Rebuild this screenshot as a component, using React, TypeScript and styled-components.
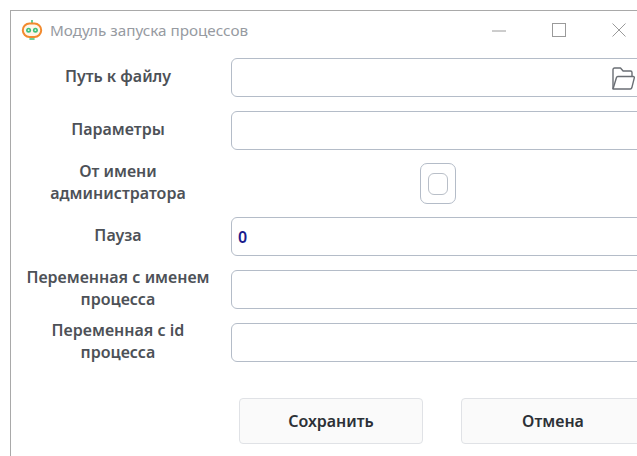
import styled, { createGlobalStyle } from 'styled-components';

const GlobalStyle = createGlobalStyle`
  html, body {
    margin: 0;
    height: 100%;
    overflow: hidden;
    background: #ffffff;
  }

  body {
    font-family: 'Noto Sans', 'Open Sans', sans-serif;
  }
`;

const Page = styled.div`
  width: 637px;
  height: 456px;
  padding: 10px 0 0 10px;
  box-sizing: border-box;
  overflow: hidden;
`;

const Window = styled.div`
  width: 680px;
  height: 460px;
  box-sizing: border-box;
  border: 1px solid #a9a9a9;
  background: #ffffff;
`;

const TitleBar = styled.div`
  height: 37px;
  display: flex;
  align-items: center;
  padding-left: 10px;
`;

const Title = styled.span`
  width: 197px;
  margin-left: 7px;
  font-size: 15.25px;
  white-space: nowrap;
  color: #969aa1;
`;

const WindowControls = styled.div`
  margin-left: 245px;
  display: flex;
  align-items: center;
  gap: 46px;
  color: #9a9a9a;
`;

const Form = styled.div`
  display: flex;
  flex-direction: column;
  padding-top: 10px;
`;

interface IRow {
  height: number;
  gapAfter: number;
}

const Row = styled.div<IRow>`
  display: grid;
  grid-template-columns: 214px 1fr;
  column-gap: 6px;
  align-items: center;
  height: ${(props) => props.height}px;
  margin-bottom: ${(props) => props.gapAfter}px;
`;

const Label = styled.div`
  font-size: 16px;
  line-height: 22px;
  font-weight: 600;
  color: #4d5157;
  text-align: center;
  margin-top: -3px;
  white-space: nowrap;
`;

const InputBox = styled.div`
  position: relative;
  height: 39px;
  box-sizing: border-box;
  display: flex;
  align-items: center;
  padding-left: 6px;
  border: 1px solid #b4bcc8;
  border-radius: 6px;
  background: #ffffff;
  font-size: 16px;
  font-weight: 600;
  color: #1a1a8c;
`;

const FolderButton = styled.div`
  position: absolute;
  left: 379px;
  top: 7px;
  display: flex;
  color: #6a6e74;
`;

const CheckCell = styled.div`
  padding-left: 189px;
  display: flex;
`;

const CheckOuter = styled.div`
  width: 36px;
  height: 41px;
  box-sizing: border-box;
  display: flex;
  align-items: center;
  justify-content: center;
  border: 1px solid #b4bcc8;
  border-radius: 7px;
`;

const CheckInner = styled.div`
  width: 20px;
  height: 22px;
  box-sizing: border-box;
  border: 1px solid #b9bfc8;
  border-radius: 6px;
`;

const Actions = styled.div`
  display: flex;
  gap: 38px;
  padding: 37px 0 0 228px;
`;

const Button = styled.div`
  flex: none;
  width: 184px;
  height: 46px;
  box-sizing: border-box;
  display: flex;
  align-items: center;
  justify-content: center;
  border: 1px solid #e0e2e6;
  border-radius: 4px;
  background: #fafafa;
  font-size: 16px;
  font-weight: 600;
  color: #2c3036;
`;

const RobotLogo = () => (
  <svg width="22" height="22" viewBox="0 0 22 22" fill="none">
    <path d="M11 1v3" stroke="#3fc07a" strokeWidth="1.6" />
    <path d="M9 20h4" stroke="#3fc07a" strokeWidth="1.6" strokeLinecap="round" />
    <rect x="1.8" y="4.6" width="18.4" height="13.4" rx="6.7" stroke="#f28a2e" strokeWidth="2" fill="#fff6ea" />
    <circle cx="7.6" cy="11.2" r="2.5" fill="#3fc07a" />
    <circle cx="14.4" cy="11.2" r="2.5" fill="#3fc07a" />
    <circle cx="7.6" cy="11.2" r="0.9" fill="#d8f3e4" />
    <circle cx="14.4" cy="11.2" r="0.9" fill="#d8f3e4" />
  </svg>
);

const MinimizeIcon = () => (
  <svg width="14" height="14" viewBox="0 0 14 14" fill="none">
    <path d="M0 8h14" stroke="currentColor" />
  </svg>
);

const MaximizeIcon = () => (
  <svg width="14" height="14" viewBox="0 0 14 14" fill="none">
    <rect x="0.5" y="0.5" width="13" height="13" stroke="currentColor" />
  </svg>
);

const CloseIcon = () => (
  <svg width="14" height="14" viewBox="0 0 14 14" fill="none">
    <path d="M0.5 0.5l13 13M13.5 0.5l-13 13" stroke="currentColor" />
  </svg>
);

const FolderIcon = () => (
  <svg width="24" height="24" viewBox="0 0 24 24" fill="none" stroke="currentColor" strokeWidth="1.4" strokeLinejoin="round">
    <path d="M2 23V3.5C2 2.7 2.7 2 3.5 2h6l2.6 3h7.4c.8 0 1.5.7 1.5 1.5V10.5" />
    <path d="M2 23l3.4-11.3c.2-.7.7-1.2 1.4-1.2h15.4c.8 0 1.3.7 1.1 1.4L20.8 21.8c-.2.7-.8 1.2-1.5 1.2H2z" />
  </svg>
);

const App = () => {
  return (
    <Page>
      <GlobalStyle />
      <Window>
        <TitleBar>
          <RobotLogo />
          <Title>Модуль запуска процессов</Title>
          <WindowControls>
            <MinimizeIcon />
            <MaximizeIcon />
            <CloseIcon />
          </WindowControls>
        </TitleBar>
        <Form>
          <Row height={39} gapAfter={14}>
            <Label>Путь к файлу</Label>
            <InputBox>
              <FolderButton>
                <FolderIcon />
              </FolderButton>
            </InputBox>
          </Row>
          <Row height={39} gapAfter={13}>
            <Label>Параметры</Label>
            <InputBox />
          </Row>
          <Row height={41} gapAfter={13}>
            <Label>
              От имени
              <br />
              администратора
            </Label>
            <CheckCell>
              <CheckOuter>
                <CheckInner />
              </CheckOuter>
            </CheckCell>
          </Row>
          <Row height={39} gapAfter={13}>
            <Label>Пауза</Label>
            <InputBox>0</InputBox>
          </Row>
          <Row height={39} gapAfter={14}>
            <Label>
              Переменная с именем
              <br />
              процесса
            </Label>
            <InputBox />
          </Row>
          <Row height={39} gapAfter={0}>
            <Label>
              Переменная с id
              <br />
              процесса
            </Label>
            <InputBox />
          </Row>
          <Actions>
            <Button>Сохранить</Button>
            <Button>Отмена</Button>
          </Actions>
        </Form>
      </Window>
    </Page>
  );
};

export default App;
